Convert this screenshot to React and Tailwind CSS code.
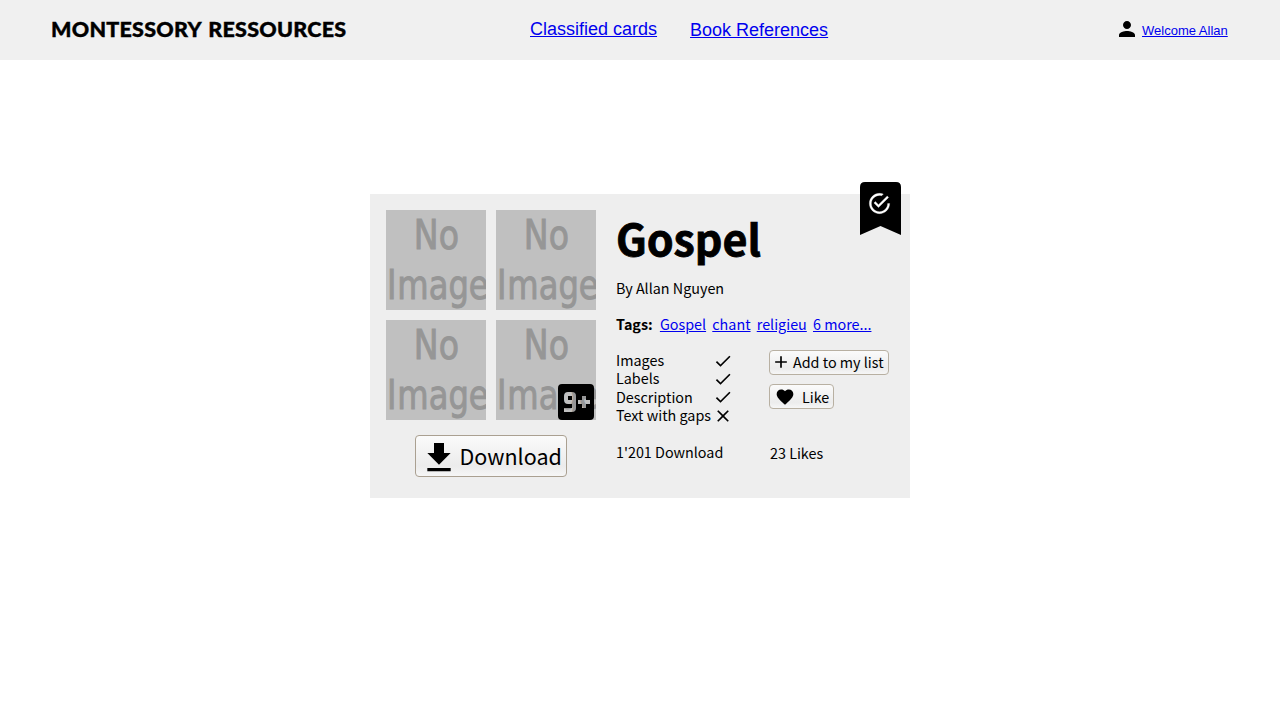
import React from "react";
import { MdPerson, MdFileDownload, MdCheck, MdClose, MdAdd, MdFavorite } from "react-icons/md";
import { IoMdCheckmarkCircleOutline } from "react-icons/io";

const link = "text-[#0000ee] underline";

function Placeholder() {
  return (
    <svg className="block size-[100px] bg-[#c0c0c0]" viewBox="0 0 100 100">
      <g fill="#969696" stroke="#969696" strokeWidth="1" fontFamily="DejaVu Sans" fontSize="40">
        <text transform="translate(27.800 38.500) scale(.83 1)">No</text>
        <text dx="0 1.1" transform="translate(.95 88.500) scale(.805 1)">Image</text>
      </g>
    </svg>
  );
}

function Button({ className, children }) {
  return (
    <button
      className={`flex items-center rounded-[4px] border bg-linear-to-b from-[#fbfbfb] via-[#ececec] via-75% to-[#f6f6f6] whitespace-nowrap ${className}`}
    >
      {children}
    </button>
  );
}

function Feature({ label, has }) {
  const Icon = has ? MdCheck : MdClose;
  return (
    <div className="flex h-[18.4px] items-center">
      <span className="w-[97px] whitespace-nowrap">{label}</span>
      <Icon className={`size-5 shrink-0 ${has ? "mt-px" : "mt-[2px] -ml-[0.5px]"}`} />
    </div>
  );
}

export default function App() {
  return (
    <div className="h-[720px] overflow-hidden bg-white text-black">
      <header className="flex h-[60px] items-start bg-[#f0f0f0] font-['Liberation_Sans',sans-serif]">
        <h1 className="ml-[51px] w-[479px] pt-[13.5px] font-['Lato',sans-serif] text-[21.5px] leading-[30px] font-black tracking-[0.25px] [word-spacing:2px] whitespace-nowrap [-webkit-text-stroke:0.4px_black]">
          MONTESSORY RESSOURCES
        </h1>
        <nav className="flex w-[585px] gap-[33px] text-[18px] leading-[20px]">
          <a className={`${link} mt-[19px]`}>Classified cards</a>
          <a className={`${link} mt-[20px]`}>Book References</a>
        </nav>
        <MdPerson className="mt-[17px] size-6" />
        <a className={`${link} mt-[23px] ml-[3px] text-[13px] leading-[15px]`}>Welcome Allan</a>
      </header>

      <main className="mx-auto mt-[134px] flex h-[304px] w-[540px] bg-[#eeeeee] px-4 pt-4 font-['Noto_Sans_CJK_SC',sans-serif] text-[14.35px]">
        <section className="w-[210px] shrink-0">
          <div className="relative grid grid-cols-2 gap-[10px]">
            <Placeholder />
            <Placeholder />
            <Placeholder />
            <Placeholder />
            <svg className="absolute right-[2px] bottom-0 size-9" viewBox="0 0 36 36">
              <path
                fillRule="evenodd"
                d="M4 0H32Q36 0 36 4V32Q36 36 32 36H4Q0 36 0 32V4Q0 0 4 0ZM10 8Q6 8 6 12V16Q6 20 10 20H14V24H6V28H14Q18 28 18 24V12Q18 8 14 8ZM10 12H14V16H10ZM24 12V16H20V20H24V24H28V20H32V16H28V12Z"
              />
            </svg>
          </div>
          <Button className="mt-[15px] ml-[29px] h-[42px] w-[152px] border-[#aaa091] pl-[3px] text-[21.5px] leading-[38px]">
            <MdFileDownload className="mt-[3px] size-10 shrink-0" />
            <span className="-mt-[1px] ml-[0.5px]">Download</span>
          </Button>
        </section>

        <section className="relative ml-5 flex-1">
          <h2 className="-mt-[2px] h-[58px] text-[43px] leading-[58px] font-bold [-webkit-text-stroke:0.8px_black]">Gospel</h2>
          <p className="mt-[11px] h-[22px] leading-[22px]">By Allan Nguyen</p>
          <p className="mt-[14px] flex h-[22px] gap-[6.2px] leading-[22px] whitespace-nowrap">
            <b className="mr-px">Tags:</b>
            <a className={link}>Gospel</a>
            <a className={link}>chant</a>
            <a className={link}>religieu</a>
            <a className={link}>6 more...</a>
          </p>
          <div className="mt-[16px] flex">
            <div className="w-[154px] leading-[18.4px]">
              <Feature label="Images" has />
              <Feature label="Labels" has />
              <Feature label="Description" has />
              <Feature label="Text with gaps" />
              <p className="mt-[18px]">1'201 Download</p>
            </div>
            <div className="-mt-px -ml-px leading-[19px]">
              <Button className="h-[25px] w-[120px] border-[#b8b0a2] pl-px">
                <MdAdd className="-mt-px size-5 shrink-0" />
                <span className="-mt-[2px] ml-[2px]">Add to my list</span>
              </Button>
              <Button className="mt-[9px] h-[25px] w-[65px] border-[#b8b0a2] pl-[5px]">
                <MdFavorite className="size-5 shrink-0" />
                <span className="-mt-px ml-[7px]">Like</span>
              </Button>
              <p className="mt-[34px] ml-px">23 Likes</p>
            </div>
          </div>
          <div className="absolute -top-[28px] left-[244px]">
            <svg className="block h-[53px] w-[41px]" viewBox="0 0 41 53">
              <path d="M0 53V5Q0 0 5 0H36Q41 0 41 5V53L20.500 44Z" />
            </svg>
            <IoMdCheckmarkCircleOutline
              className="absolute top-[9.3px] left-[6.7px] size-[25px] text-white"
              stroke="currentColor"
              strokeWidth="6"
            />
          </div>
        </section>
      </main>
    </div>
  );
}
